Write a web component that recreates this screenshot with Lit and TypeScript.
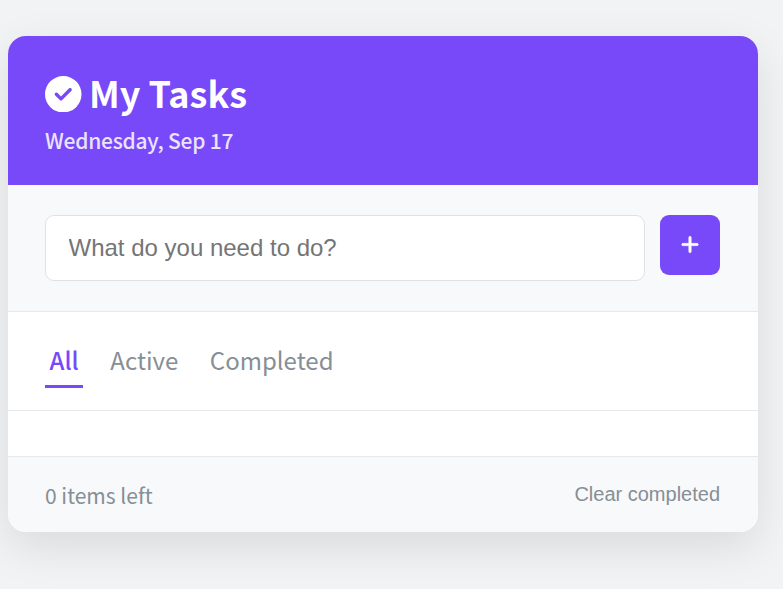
import { LitElement, html, css } from "lit";
import { customElement, state } from "lit/decorators.js";
import { classMap } from "lit/directives/class-map.js";

const FILTERS = ["All", "Active", "Completed"];

@customElement("app-root")
export class AppRoot extends LitElement {
  @state() filter = "All";

  static styles = css`
    :host {
      display: block;
      box-sizing: border-box;
      min-height: 589px;
      padding: 36px 25px 57px 8px;
      overflow: hidden;
      background: #f1f3f5;
      font-family: "Noto Sans CJK SC", "Noto Sans", sans-serif;
      color: #868e96;
    }
    *, *::before { box-sizing: border-box; }
    .card {
      width: 750px;
      border-radius: 18px;
      overflow: hidden;
      background: #fff;
      box-shadow: 0 15px 45px rgba(0, 0, 0, 0.1);
    }
    header {
      height: 149px;
      padding: 35px 37px 0;
      background: #7749f8;
      color: #fff;
    }
    h1 {
      display: flex;
      align-items: center;
      gap: 7.5px;
      height: 46px;
      margin: 0;
      font-size: 36px;
      font-weight: 700;
      line-height: 42px;
      white-space: nowrap;
    }
    .title { height: 46px; }
    .check { width: 36.5px; height: 36.5px; fill: currentColor; }
    .date {
      margin: 6px 0 0;
      font-size: 21px;
      font-weight: 500;
      letter-spacing: -0.24px;
      line-height: 34px;
      opacity: 0.85;
    }
    .entry {
      display: flex;
      align-items: flex-start;
      gap: 15px;
      height: 127px;
      padding: 30px 38px 0 37px;
      background: #f8f9fb;
      border-bottom: 1px solid #e6e8eb;
    }
    input {
      flex: 1;
      min-width: 0;
      height: 66px;
      padding: 0 22.5px;
      border: 1px solid #dee2e6;
      border-radius: 9px;
      background: #fff;
      font: 24px "Liberation Sans", Arial, sans-serif;
      outline: none;
    }
    input::placeholder { color: #757575; opacity: 1; }
    button { margin: 0; padding: 0; border: 0; background: none; font: inherit; color: inherit; cursor: pointer; }
    .add {
      display: flex;
      align-items: center;
      justify-content: center;
      width: 60px;
      height: 60px;
      padding-bottom: 1px;
      border-radius: 9px;
      background: #7749f8;
      color: #fff;
    }
    .plus { width: 18px; height: 21px; fill: currentColor; stroke: currentColor; stroke-width: 10; }
    .filters {
      display: flex;
      gap: 22.6px;
      height: 99px;
      padding: 22px 37px 0;
      border-bottom: 1px solid #e6e8eb;
    }
    .filter {
      height: 54px;
      padding: 0 4.5px;
      border-bottom: 3px solid transparent;
      font-size: 24px;
      line-height: 52px;
    }
    .filter.active { color: #7749f8; border-bottom-color: #7749f8; font-weight: 500; }
    .list { height: 45px; }
    footer {
      display: flex;
      justify-content: space-between;
      height: 76px;
      padding: 19px 38px 0 37px;
      background: #f8f9fb;
      border-top: 1px solid #e6e8eb;
    }
    .count { font-size: 21px; line-height: 38px; }
    .clear { height: 36px; font: 20px/36px "Liberation Sans", Arial, sans-serif; }
  `;

  render() {
    return html`
      <main class="card">
        <header>
          <h1>
            <svg class="check" viewBox="0 0 512 512" aria-hidden="true">
              <path d="M256 512A256 256 0 1 0 256 0a256 256 0 1 0 0 512zM369 209L241 337c-9.4 9.4-24.6 9.4-33.9 0l-64-64c-9.4-9.4-9.4-24.6 0-33.9s24.6-9.4 33.9 0l47 47L335 175c9.4-9.4 24.6-9.4 33.9 0s9.4 24.6 0 33.9z"/>
            </svg>
            <span class="title">My Tasks</span>
          </h1>
          <p class="date">Wednesday, Sep 17</p>
        </header>
        <section class="entry">
          <input type="text" placeholder="What do you need to do?" />
          <button class="add" aria-label="Add task">
            <svg class="plus" viewBox="0 0 448 512" aria-hidden="true">
              <path d="M256 80c0-17.7-14.3-32-32-32s-32 14.3-32 32V224H48c-17.7 0-32 14.3-32 32s14.3 32 32 32H192V432c0 17.7 14.3 32 32 32s32-14.3 32-32V288H400c17.7 0 32-14.3 32-32s-14.3-32-32-32H256V80z"/>
            </svg>
          </button>
        </section>
        <nav class="filters">
          ${FILTERS.map(
            (name) => html`<button
              class=${classMap({ filter: true, active: this.filter === name })}
              @click=${() => (this.filter = name)}
            >${name}</button>`
          )}
        </nav>
        <div class="list"></div>
        <footer>
          <span class="count">0 items left</span>
          <button class="clear">Clear completed</button>
        </footer>
      </main>
    `;
  }
}
